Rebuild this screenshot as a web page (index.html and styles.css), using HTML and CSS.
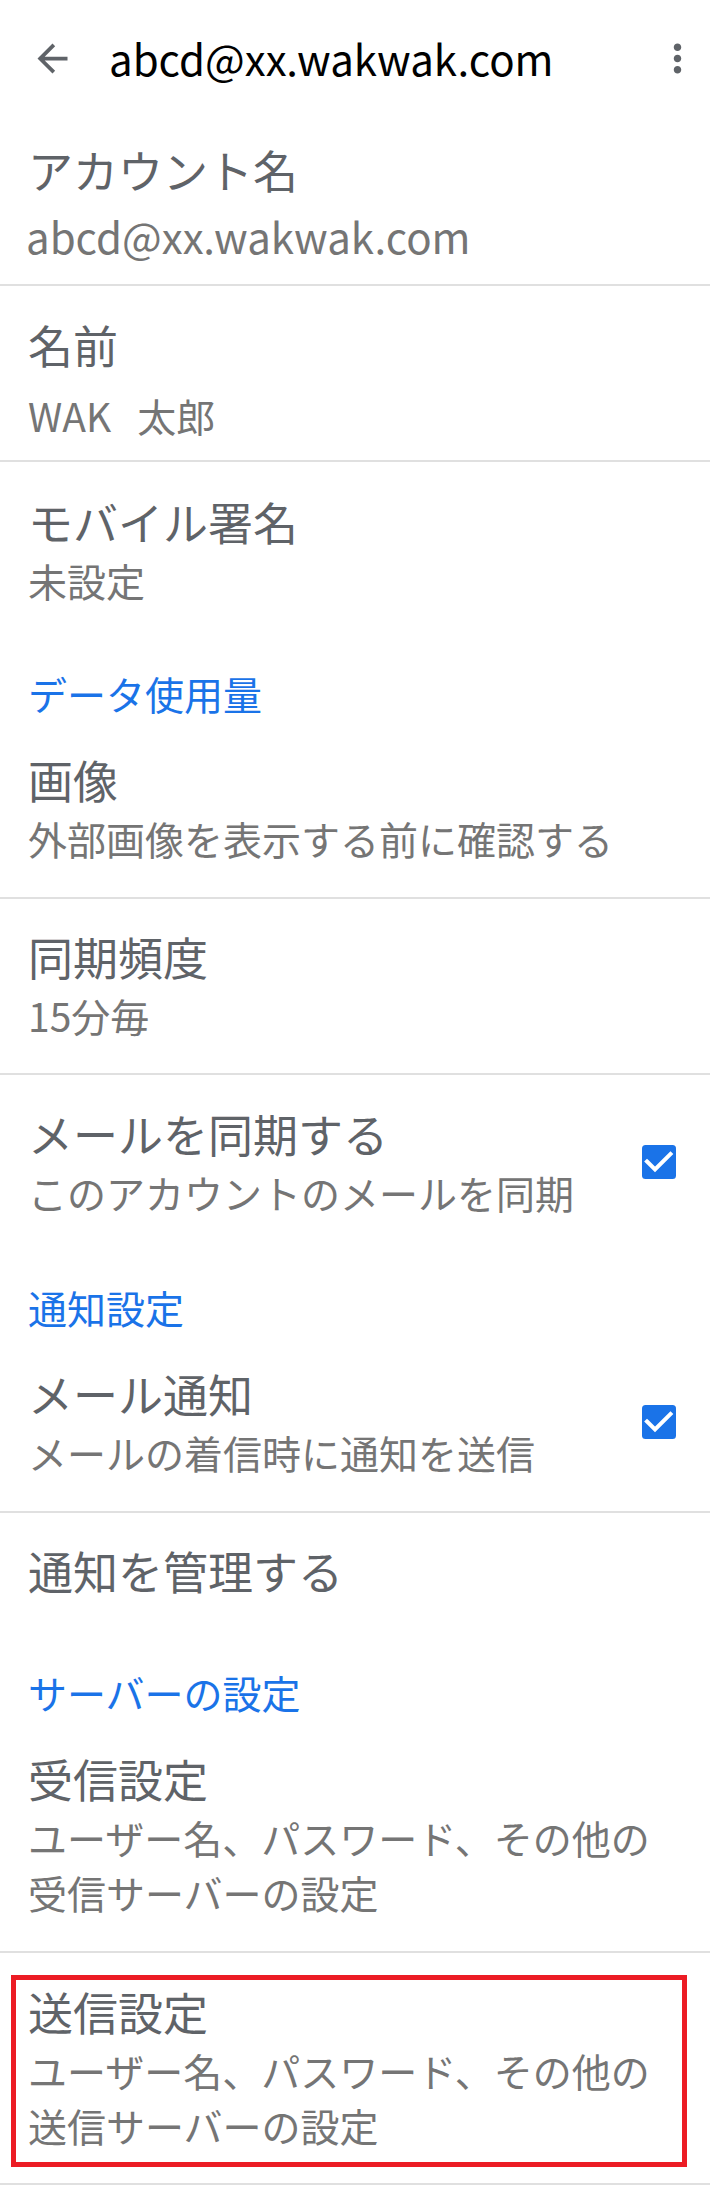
FILE: index.html
```html
<!DOCTYPE html>
<html lang="ja">
<head>
<meta charset="utf-8">
<title>abcd@xx.wakwak.com</title>
<link rel="stylesheet" href="styles.css">
</head>
<body>
<header class="appbar">
  <svg class="appbar-icon appbar-back" viewBox="0 0 24 24" aria-hidden="true"><path d="M20 11H7.830l5.590-5.590L12 4l-8 8 8 8 1.410-1.410L7.830 13H20v-2z"/></svg>
  <h1 class="appbar-title">abcd@xx.wakwak.com</h1>
  <svg class="appbar-icon appbar-more" viewBox="0 0 24 24" aria-hidden="true"><path d="M12 8c1.1 0 2-.9 2-2s-.9-2-2-2-2 .9-2 2 .9 2 2 2zm0 2c-1.1 0-2 .9-2 2s.9 2 2 2 2-.9 2-2-.9-2-2-2zm0 6c-1.1 0-2 .9-2 2s.9 2 2 2 2-.9 2-2-.9-2-2-2z"/></svg>
</header>

<main class="prefs">
  <div class="pref pref--divided pref--account">
    <div class="pref-text">
      <div class="pref-title">アカウント名</div>
      <div class="pref-summary pref-summary--latin">abcd@xx.wakwak.com</div>
    </div>
  </div>

  <div class="pref pref--divided pref--name">
    <div class="pref-text">
      <div class="pref-title">名前</div>
      <div class="pref-summary pre">WAK   太郎</div>
    </div>
  </div>

  <div class="pref pref--sig">
    <div class="pref-text">
      <div class="pref-title">モバイル署名</div>
      <div class="pref-summary">未設定</div>
    </div>
  </div>

  <div class="section">データ使用量</div>

  <div class="pref pref--divided pref--images">
    <div class="pref-text">
      <div class="pref-title">画像</div>
      <div class="pref-summary">外部画像を表示する前に確認する</div>
    </div>
  </div>

  <div class="pref pref--divided pref--freq">
    <div class="pref-text">
      <div class="pref-title">同期頻度</div>
      <div class="pref-summary">15分毎</div>
    </div>
  </div>

  <div class="pref pref--check">
    <div class="pref-text">
      <div class="pref-title">メールを同期する</div>
      <div class="pref-summary">このアカウントのメールを同期</div>
    </div>
    <svg class="checkbox" viewBox="0 0 34 34" aria-hidden="true"><rect width="34" height="34" rx="3.5"/><polyline points="5,16.5 13,24.5 28.5,9"/></svg>
  </div>

  <div class="section">通知設定</div>

  <div class="pref pref--divided pref--check pref--notify">
    <div class="pref-text">
      <div class="pref-title">メール通知</div>
      <div class="pref-summary">メールの着信時に通知を送信</div>
    </div>
    <svg class="checkbox" viewBox="0 0 34 34" aria-hidden="true"><rect width="34" height="34" rx="3.5"/><polyline points="5,16.5 13,24.5 28.5,9"/></svg>
  </div>

  <div class="pref pref--manage">
    <div class="pref-text">
      <div class="pref-title">通知を管理する</div>
    </div>
  </div>

  <div class="section">サーバーの設定</div>

  <div class="pref pref--divided pref--incoming">
    <div class="pref-text">
      <div class="pref-title">受信設定</div>
      <div class="pref-summary">ユーザー名、パスワード、その他の<br>受信サーバーの設定</div>
    </div>
  </div>

  <div class="pref pref--divided pref--outgoing">
    <div class="highlight-frame"></div>
    <div class="pref-text">
      <div class="pref-title">送信設定</div>
      <div class="pref-summary">ユーザー名、パスワード、その他の<br>送信サーバーの設定</div>
    </div>
  </div>
</main>
</body>
</html>
```

FILE: styles.css
```css
html, body {
  margin: 0;
  padding: 0;
  background: #ffffff;
}

body {
  font-family: "Noto Sans CJK JP", "Noto Sans", sans-serif;
}

/* App bar */
.appbar {
  display: flex;
  align-items: center;
  height: 112px;
  padding-top: 4px;
  box-sizing: border-box;
}

.appbar-icon {
  flex: none;
  width: 45px;
  height: 45px;
  fill: #5f6368;
}

.appbar-back {
  margin-left: 30px;
}

.appbar-title {
  flex: 1;
  margin: 0 0 0 34px;
  font-size: 42px;
  font-weight: 400;
  line-height: 1;
  color: #000000;
}

.appbar-more {
  margin-right: 10px;
}

/* Preference rows */
.pref {
  display: flex;
  align-items: center;
  padding: 28px 34px 30px 28px;
}

.pref--divided {
  border-bottom: 2px solid #e0e0e0;
}

.pref-text {
  flex: 1;
  min-width: 0;
}

.pref-title {
  font-size: 45px;
  line-height: 62px;
  color: #5f6368;
}

.pref-summary {
  font-size: 39px;
  line-height: 55px;
  color: #757575;
}

.pref-summary--latin {
  font-size: 42px;
  margin-left: -2px;
}

.pre {
  white-space: pre;
}

.pref--account { padding-top: 27px; padding-bottom: 21px; }
.pref--account .pref-summary { margin-top: 7px; }
.pref--name { padding-top: 28px; padding-bottom: 17px; }
.pref--name .pref-summary { margin-top: 12px; }
.pref--sig { padding-top: 29px; }
.pref--images { padding-bottom: 31px; }
.pref--freq { padding-top: 27px; }
.pref--check { padding-bottom: 32px; }
.pref--notify { padding-bottom: 31px; }
.pref--manage { padding-top: 27px; padding-bottom: 35px; }
.pref--incoming { padding-bottom: 31px; }

/* Section headers */
.section {
  padding: 28px 28px 0;
  font-size: 39px;
  line-height: 55px;
  color: #1a73e8;
}

/* Checkbox */
.checkbox {
  flex: none;
  width: 34px;
  height: 34px;
}

.checkbox rect {
  fill: #1a73e8;
}

.checkbox polyline {
  fill: none;
  stroke: #ffffff;
  stroke-width: 4;
  stroke-linecap: square;
}

/* Annotation frame */
.pref--outgoing {
  position: relative;
}

.highlight-frame {
  position: absolute;
  left: 11px;
  right: 23px;
  top: 22px;
  bottom: 16px;
  border: 5px solid #ec1c24;
}
```
